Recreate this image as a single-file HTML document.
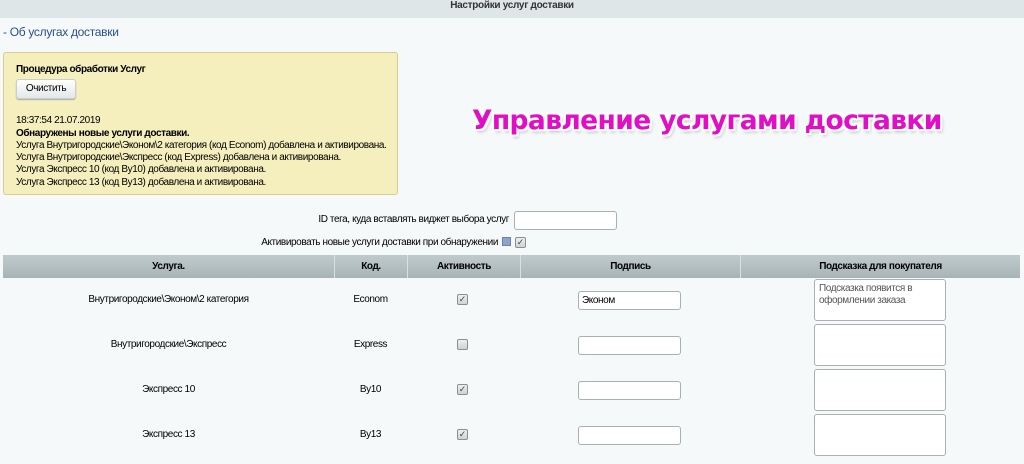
<!DOCTYPE html>
<html><head><meta charset="utf-8"><style>
*{box-sizing:border-box;margin:0;padding:0}
body{width:1024px;height:464px;overflow:hidden;background:#f5f9f9;font-family:"Liberation Sans",Arial,sans-serif;font-size:10px;letter-spacing:-0.4px;color:#000;position:relative}
.a{position:absolute;white-space:nowrap}
.top{left:0;top:0;width:1024px;height:18px;background:#dfe6e7;text-align:center;font-weight:bold;font-size:10px;letter-spacing:-0.3px;line-height:12px;color:#333}
.link{left:3px;top:25px;font-size:12px;letter-spacing:-0.3px;color:#2b4f8d}
.box{left:3px;top:52px;width:395px;height:143px;background:#f5eebd;border:1px solid #d9cd8a;border-radius:3px;padding:11px 12px;line-height:12.3px;font-size:10px}
.btn{display:inline-block;margin:3px 0 16px 0;width:60px;height:20px;border:1px solid #c9cfd0;border-radius:3px;background:linear-gradient(#fff,#e3e8e9);text-align:center;line-height:18px;font-size:10px;box-shadow:0 1px 1px #aaa}
.mag{left:472px;top:105px;font-family:"DejaVu Sans",sans-serif;font-weight:bold;font-size:26.5px;color:#e00fc6;letter-spacing:-0.6px;text-shadow:-2px -2px 0 #fff,2px -2px 0 #fff,-2px 2px 0 #fff,2px 2px 0 #fff,0 2px 0 #fff,0 -2px 0 #fff,2px 0 0 #fff,-2px 0 0 #fff,2px 3px 3px #bbb}
.inp{background:#fff;border:1px solid #a8b0b2;border-radius:3px}
.th{top:255px;height:23px;background:linear-gradient(#c0cacc,#a7b4b6);border-left:1px solid #d9e0e1;text-align:center;font-weight:bold;line-height:23px;font-size:10px}
.cb{width:11px;height:11px;border:1px solid #8a8f90;border-radius:2px;background:linear-gradient(#eee,#cfd3d4);font-size:9px;line-height:9px;text-align:center;color:#444;letter-spacing:0}
.td{text-align:center;font-size:10px}
</style></head><body>
<div class="a top">Настройки услуг доставки</div>
<div class="a link">- Об услугах доставки</div>
<div class="a box"><b>Процедура обработки Услуг</b><br><span class="btn">Очистить</span><br>18:37:54 21.07.2019<br><b>Обнаружены новые услуги доставки.</b><br>Услуга Внутригородские\Эконом\2 категория (код Econom) добавлена и активирована.<br>Услуга Внутригородские\Экспресс (код Express) добавлена и активирована.<br>Услуга Экспресс 10 (код By10) добавлена и активирована.<br>Услуга Экспресс 13 (код By13) добавлена и активирована.</div>
<div class="a mag">Управление услугами доставки</div>
<div class="a" style="left:250px;top:214px;width:259px;text-align:right">ID тега, куда вставлять виджет выбора услуг</div>
<div class="a inp" style="left:514px;top:211px;width:103px;height:19px"></div>
<div class="a" style="left:150px;top:237px;width:348px;text-align:right">Активировать новые услуги доставки при обнаружении</div>
<div class="a" style="left:502px;top:237px;width:9px;height:9px;background:#8fa3c9;border:1px solid #6d82ad"></div>
<div class="a cb" style="left:515px;top:237px">✓</div>
<div class="a th" style="left:3px;width:331px;border-left:none">Услуга.</div>
<div class="a th" style="left:334px;width:73px">Код.</div>
<div class="a th" style="left:407px;width:113px">Активность</div>
<div class="a th" style="left:520px;width:220px">Подпись</div>
<div class="a th" style="left:740px;width:280px">Подсказка для покупателя</div>

<div class="a td" style="left:3px;top:294px;width:331px">Внутригородские\Эконом\2 категория</div>
<div class="a td" style="left:334px;top:294px;width:73px">Econom</div>
<div class="a cb" style="left:457px;top:294px">✓</div>
<div class="a inp" style="left:578px;top:291px;width:103px;height:19px;padding:3px 3px;font-size:10px">Эконом</div>
<div class="a inp" style="left:814px;top:279px;width:132px;height:42px;padding:3px 4px;font-size:10px;color:#555;line-height:12px;white-space:normal">Подсказка появится в оформлении заказа</div>

<div class="a td" style="left:3px;top:339px;width:331px">Внутригородские\Экспресс</div>
<div class="a td" style="left:334px;top:339px;width:73px">Express</div>
<div class="a cb" style="left:457px;top:339px"></div>
<div class="a inp" style="left:578px;top:336px;width:103px;height:19px"></div>
<div class="a inp" style="left:814px;top:324px;width:132px;height:42px"></div>

<div class="a td" style="left:3px;top:384px;width:331px">Экспресс 10</div>
<div class="a td" style="left:334px;top:384px;width:73px">By10</div>
<div class="a cb" style="left:457px;top:384px">✓</div>
<div class="a inp" style="left:578px;top:381px;width:103px;height:19px"></div>
<div class="a inp" style="left:814px;top:369px;width:132px;height:42px"></div>

<div class="a td" style="left:3px;top:429px;width:331px">Экспресс 13</div>
<div class="a td" style="left:334px;top:429px;width:73px">By13</div>
<div class="a cb" style="left:457px;top:429px">✓</div>
<div class="a inp" style="left:578px;top:426px;width:103px;height:19px"></div>
<div class="a inp" style="left:814px;top:414px;width:132px;height:42px"></div>
</body></html>
